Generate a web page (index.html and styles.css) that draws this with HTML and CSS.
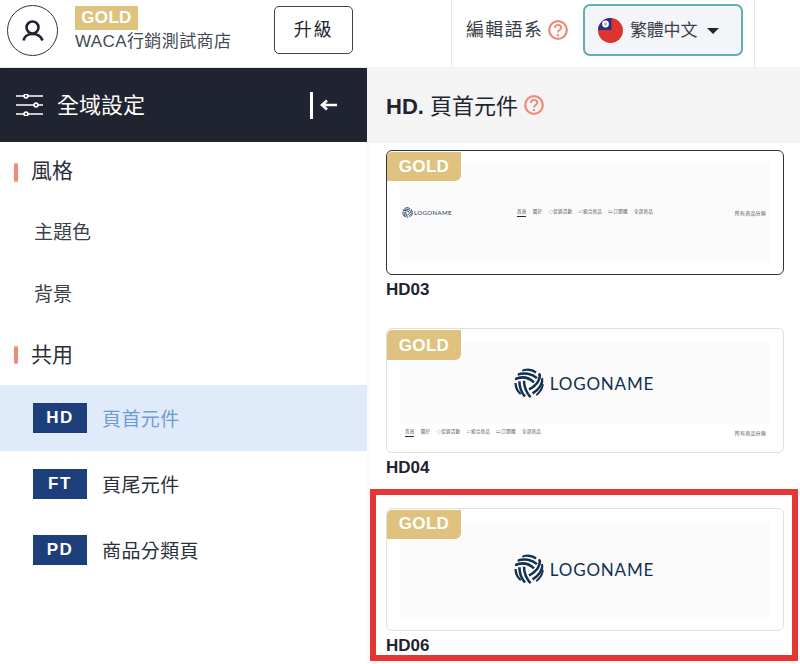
FILE: index.html
```html
<!DOCTYPE html>
<html lang="zh-Hant">
<head>
<meta charset="utf-8">
<title>全域設定</title>
<link rel="stylesheet" href="styles.css">
</head>
<body>
<svg class="defs" width="0" height="0" aria-hidden="true">
  <defs>
    <clipPath id="ballclip"><circle cx="15" cy="15" r="14.800"/></clipPath>
    <symbol id="ball" viewBox="0 0 30 30">
      <g fill="none" stroke="#12304f" stroke-width="2.500" clip-path="url(#ballclip)">
        <path d="M8 2.400C12 .8 18 1.400 22 4.400"/>
        <path d="M3.600 6.600C10 4.200 18 5.600 23 10.200"/>
        <path d="M.8 11.200C8 8 15 9.600 20 14.400"/>
        <path d="M1.400 15C1.600 19.400 3.400 23.400 6.600 26.400"/>
        <path d="M5.400 13.200C5.400 18.600 7.400 24.400 11 28.600"/>
        <path d="M10 12.800C10 18.400 12.400 24.600 16.600 29.400"/>
        <path d="M25.400 5C27 10 24 16.600 15 21.400"/>
        <path d="M28.400 9.800C29 15 25.400 21.400 18.600 25.400"/>
        <path d="M29.600 16C28.400 20.400 26.400 24.400 22.400 27.400"/>
      </g>
    </symbol>
    <symbol id="help" viewBox="0 0 20 20">
      <circle cx="10" cy="10" r="8.800" fill="none" stroke="#f08a7a" stroke-width="2.300"/>
      <path d="M6.800 7.900C6.900 5.900 8.300 4.900 10 4.900c1.900 0 3.200 1.100 3.200 2.800 0 2.400-3.200 2.400-3.200 4.700" fill="none" stroke="#f08a7a" stroke-width="1.900"/>
      <circle cx="10" cy="15.100" r="1.200" fill="#f08a7a"/>
    </symbol>
  </defs>
</svg>
<div class="page">
  <header class="topbar">
    <div class="account">
      <div class="avatar">
        <svg width="22" height="22" viewBox="0 0 22 22" fill="none" stroke="#1f2430" stroke-width="2.600">
          <circle cx="10.500" cy="7.500" r="6"/>
          <path d="M1.500 20.500C2.500 16.200 6 14 10.500 14s8.500 2.200 10 6.500"/>
        </svg>
      </div>
      <div class="store">
        <span class="store-tier">GOLD</span>
        <span class="store-name">WACA行銷測試商店</span>
      </div>
      <button class="upgrade">升級</button>
    </div>
    <div class="lang">
      <span class="lang-label">編輯語系</span>
      <svg class="help-icon"><use href="#help"/></svg>
      <div class="lang-select">
        <svg width="25" height="25" viewBox="0 0 25 25">
          <defs><clipPath id="flagclip"><circle cx="12.500" cy="12.500" r="12.500"/></clipPath></defs>
          <g clip-path="url(#flagclip)">
            <rect width="25" height="25" fill="#dc352f"/>
            <rect width="13.500" height="12" fill="#2c2f86"/>
            <circle cx="7.500" cy="6" r="3.400" fill="#fff"/>
            <circle cx="7.500" cy="6" r="1.700" fill="#2c2f86" opacity=".35"/>
          </g>
        </svg>
        <span class="lang-value">繁體中文</span>
        <span class="caret"></span>
      </div>
    </div>
    <div class="topbar-rest"></div>
  </header>
  <div class="body">
    <aside class="sidebar">
      <div class="side-head">
        <svg width="29" height="22" viewBox="0 0 29 22" fill="none" stroke="#fff" stroke-width="1.600">
          <path d="M1 2h27M1 11h27M1 20h27"/>
          <circle cx="11" cy="2" r="1.900" fill="#1f2430"/>
          <circle cx="21" cy="11" r="1.900" fill="#1f2430"/>
          <circle cx="11" cy="20" r="1.900" fill="#1f2430"/>
        </svg>
        <span class="side-title">全域設定</span>
        <span class="collapse">
          <span class="collapse-bar"></span>
          <svg width="18" height="14" viewBox="0 0 18 14" fill="none" stroke="#fff" stroke-width="2.600">
            <path d="M18 7H3M8 2.500L3 7l5 4.500"/>
          </svg>
        </span>
      </div>
      <nav class="side-nav">
        <div class="group">風格</div>
        <a class="plain">主題色</a>
        <a class="plain">背景</a>
        <div class="group">共用</div>
        <a class="row row-active"><span class="code">HD</span><span class="row-label">頁首元件</span></a>
        <a class="row"><span class="code">FT</span><span class="row-label">頁尾元件</span></a>
        <a class="row"><span class="code">PD</span><span class="row-label">商品分類頁</span></a>
      </nav>
    </aside>
    <main class="main">
      <div class="main-head">
        <h1 class="main-title"><b>HD.</b> 頁首元件</h1>
        <svg class="help-icon"><use href="#help"/></svg>
      </div>
      <div class="list">
        <section class="item">
          <div class="card card-current">
            <span class="tag">GOLD</span>
            <div class="thumb thumb-inline">
              <span class="logo-small"><svg class="ball-small"><use href="#ball"/></svg><span>LOGONAME</span></span>
              <span class="menu menu-inline">
                <span class="on">首頁</span><span>關於</span><span>◇促銷活動</span><span>▱組合商品</span><span>▭訂閱購</span><span>全部商品</span>
              </span>
              <span class="menu-end">所有商品分類</span>
            </div>
          </div>
          <div class="item-name">HD03</div>
        </section>
        <section class="item">
          <div class="card card-tall-tag">
            <span class="tag">GOLD</span>
            <div class="thumb-stack">
              <div class="banner banner-short">
                <svg class="ball"><use href="#ball"/></svg><span class="logo-text">LOGONAME</span>
              </div>
              <div class="menu-row">
                <span class="menu">
                  <span class="on">首頁</span><span>關於</span><span>◇促銷活動</span><span>▱組合商品</span><span>▭訂閱購</span><span>全部商品</span>
                </span>
                <span class="menu-end">所有商品分類</span>
              </div>
            </div>
          </div>
          <div class="item-name">HD04</div>
        </section>
        <section class="item item-marked">
          <div class="card card-slim">
            <span class="tag">GOLD</span>
            <div class="banner banner-full">
              <svg class="ball"><use href="#ball"/></svg><span class="logo-text">LOGONAME</span>
            </div>
          </div>
          <div class="item-name">HD06</div>
          <span class="mark"></span>
        </section>
      </div>
    </main>
  </div>
</div>
</body>
</html>
```
FILE: styles.css
```css
* { box-sizing: border-box; }
html, body { margin: 0; padding: 0; background: #fff; }
body {
  font-family: "Liberation Sans", "Noto Sans CJK TC", sans-serif;
  color: #1f2430;
}
.defs { position: absolute; }
.page { width: 800px; height: 664px; overflow: hidden; display: flex; flex-direction: column; }

.topbar { height: 68px; display: flex; flex: none; }
.account { width: 452px; display: flex; align-items: flex-start; padding: 5px 0 0 7px; border-right: 1px solid #e8e8e8; border-bottom: 1px solid #e8e8e8; }
.avatar { width: 51px; height: 51px; border: 1px solid #333; border-radius: 50%; display: flex; align-items: center; justify-content: center; flex: none; }
.store { margin: 1px 0 0 17px; width: 199px; display: flex; flex-direction: column; align-items: flex-start; }
.store-tier { width: 63px; text-align: center; background: #dec27e; color: #fff; font-weight: 700; font-size: 17px; line-height: 24px; letter-spacing: .3px; }
.store-name { font-size: 17px; line-height: 24px; color: #444a55; letter-spacing: .4px; }
.upgrade { width: 79px; height: 48px; margin-top: 1px; padding: 0 0 4px; background: #fff; border: 1px solid #444; border-radius: 5px; font: inherit; font-size: 18px; letter-spacing: 1.800px; color: #1f2430; }
.lang { width: 303px; display: flex; align-items: flex-start; padding: 4px 0 0 14px; border-right: 1px solid #e8e8e8; border-bottom: 1px solid #e8e8e8; }
.lang-label { font-size: 18px; line-height: 52px; letter-spacing: 1.300px; color: #3a3f4a; width: 82px; }
.help-icon { width: 20px; height: 20px; flex: none; }
.lang > .help-icon { margin: 16px 15px 0 0; }
.lang-select { width: 160px; height: 52px; display: flex; align-items: center; padding-left: 13px; background: #f3f5f8; border: 2px solid #62adb6; border-radius: 7px; }
.lang-value { font-size: 17px; margin-left: 7px; padding-bottom: 3px; letter-spacing: -.2px; color: #3a3f4a; width: 77px; }
.caret { width: 0; height: 0; margin-top: 2px; border-left: 6px solid transparent; border-right: 6px solid transparent; border-top: 6px solid #1f2430; }
.topbar-rest { flex: 1; border-bottom: 1px solid #e8e8e8; }

.body { flex: 1; display: flex; min-height: 0; }
.sidebar { width: 367px; flex: none; box-shadow: 2px 0 2px rgba(0,0,0,.02); }
.side-head { height: 74px; background: #1f2430; display: flex; align-items: center; padding-left: 15px; color: #fff; }
.side-title { font-size: 22px; margin-left: 13px; width: 253px; padding-bottom: 5px; }
.collapse { display: flex; align-items: center; gap: 6px; }
.collapse-bar { width: 3px; height: 27px; background: #fff; }
.side-nav { display: flex; flex-direction: column; }
.group { height: 57px; display: flex; align-items: center; padding: 0 0 3px 31px; font-size: 21px; position: relative; color: #2a2f3a; }
.group::before { content: ""; position: absolute; left: 14px; top: 21px; width: 4px; height: 19px; border-radius: 2px; background: #f08a7a; }
.plain { height: 62px; display: flex; align-items: center; padding-left: 34px; font-size: 19px; color: #3a3f4a; }
.plain + .group { height: 62px; padding-bottom: 3px; }
.plain + .group::before { top: 23px; height: 18px; }
.row { height: 66px; display: flex; align-items: center; padding-left: 33px; font-size: 19px; letter-spacing: .4px; color: #2a2f3a; }
.row-label { padding-bottom: 2px; }
.row-active { background: #dfebfb; color: #6f9bd2; }
.code { width: 54px; height: 30px; margin-right: 15px; background: #1c3f7c; color: #fff; font-weight: 700; font-size: 17px; letter-spacing: 1.500px; display: flex; align-items: center; justify-content: center; }

.main { flex: 1; min-width: 0; }
.main-head { height: 76px; background: #f4f4f5; display: flex; align-items: center; padding: 0 0 0 19px; gap: 6px; margin-top: -1px; }
.main-title { margin: 0; padding-bottom: 2px; font-size: 22px; font-weight: 400; color: #1f2430; }
.main-title b { font-weight: 700; }
.list { padding: 7px 0 0 19px; display: flex; flex-direction: column; gap: 25px; }
.item { width: 398px; position: relative; }
.item-marked { margin-top: 2px; }
.card { height: 125px; border: 1px solid #e0e0e0; border-radius: 6px; padding: 13px 13px 0; position: relative; background: #fff; }
.card-current { border-color: #333; }
.card-slim { height: 123px; padding-top: 12px; }
.tag { position: absolute; left: 0; top: 1px; width: 74px; height: 29px; background: #dec27e; color: #fff; font-weight: 700; font-size: 17px; letter-spacing: .3px; line-height: 29px; text-align: center; border-radius: 5px 0 6px 0; }
.card-tall-tag .tag { height: 30px; line-height: 31px; }
.card-slim .tag { line-height: 28px; }
.item-name { font-size: 17px; height: 28px; line-height: 26px; padding-top: 2px; font-weight: 700; color: #1f2430; }
.thumb { height: 98px; background: #fbfbfb; }
.thumb-inline { display: flex; align-items: center; margin-top: -1px; padding: 0 4px 0 2px; }
.logo-small { display: flex; align-items: center; gap: 1px; font-family: Lato, sans-serif; font-size: 6px; letter-spacing: .4px; color: #12304f; width: 115px; }
.ball-small { width: 11px; height: 11px; }
.menu { display: flex; gap: 6.400px; font-size: 4.500px; line-height: 9px; color: #555; letter-spacing: .2px; font-family: "Noto Sans CJK TC", sans-serif; }
.menu-inline { flex: 1; }
.menu .on { border-bottom: 1px solid #12304f; }
.menu-end { font-size: 5px; letter-spacing: .2px; color: #555; font-family: "Noto Sans CJK TC", sans-serif; }
.thumb-stack { height: 98px; }
.banner { display: flex; align-items: center; justify-content: center; background: #fbfbfb; gap: 6px; padding-right: 2px; }
.banner-short { height: 82px; }
.banner-full { height: 96px; }
.ball { width: 30px; height: 30px; }
.logo-text { font-family: Lato, sans-serif; font-size: 17px; letter-spacing: .8px; color: #12304f; white-space: nowrap; }
.menu-row { display: flex; justify-content: space-between; align-items: center; height: 16px; padding: 0 4px 0 5px; }
.mark { position: absolute; left: -16px; right: -14px; top: -19px; bottom: -2px; border: 6px solid #e53535; pointer-events: none; }
```
